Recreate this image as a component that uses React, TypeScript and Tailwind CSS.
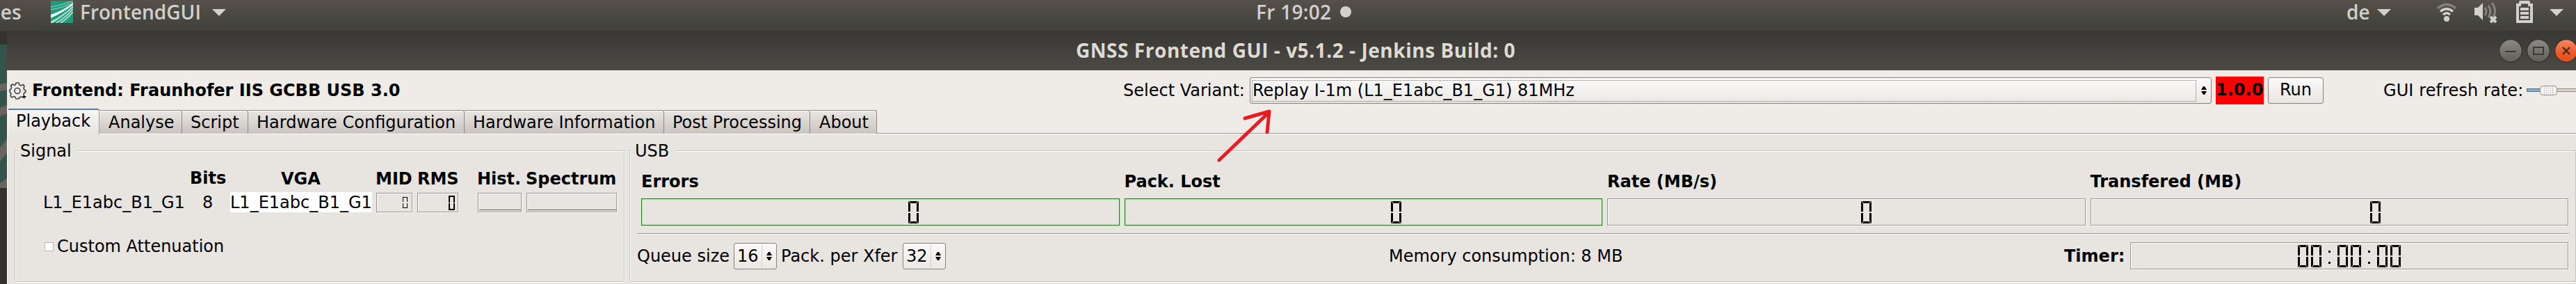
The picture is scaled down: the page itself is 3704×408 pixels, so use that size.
import type { ReactNode } from "react";

function Caret({ className = "" }: { className?: string }) {
  return (
    <svg className={`shrink-0 ${className}`} width="20" height="10" viewBox="0 0 20 10">
      <path d="M0 0H20L10 10Z" fill="#d2d0cc" />
    </svg>
  );
}

function Corner({ className }: { className: string }) {
  return <span className={`absolute h-px w-[4px] bg-[#b5b2ae] ${className}`} />;
}

/* Seven-segment zero: an upper and a lower bracket */
function Digit({ small = false, thin = false }: { small?: boolean; thin?: boolean }) {
  if (small) {
    return (
      <span className="flex shrink-0 flex-col justify-between" aria-label="0">
        <span className={thin ? "h-[7px] w-[7px] border border-b-0 border-black" : "h-[10px] w-[9px] border-2 border-b-0 border-black"} />
        <span className={thin ? "mt-0.5 h-[7px] w-[7px] border border-t-0 border-black" : "mt-px h-[10px] w-[9px] border-2 border-t-0 border-black"} />
      </span>
    );
  }
  return (
    <span className="relative flex h-8 w-[15px] shrink-0 flex-col justify-between" aria-label="0">
      <span className="h-[15px] border-[3px] border-b-0 border-black" />
      <span className="h-[15px] border-[3px] border-t-0 border-black" />
      <Corner className="left-0 top-[1px] rotate-45" />
      <Corner className="right-0 top-[1px] -rotate-45" />
      <Corner className="bottom-[1px] left-0 -rotate-45" />
      <Corner className="bottom-[1px] right-0 rotate-45" />
    </span>
  );
}

function Colon() {
  return (
    <span className="flex h-8 w-[15px] shrink-0 flex-col items-center gap-[13px] pt-2" aria-label=":">
      <span className="h-[3px] w-[3px] bg-black" />
      <span className="h-[3px] w-[3px] bg-black" />
    </span>
  );
}

function Arrows({ className = "" }: { className?: string }) {
  return (
    <svg className={`shrink-0 ${className}`} width="8" height="12" viewBox="0 0 8 12">
      <path d="M0 5L3 0H5L8 5ZM0 7H8L5 12H3Z" fill="#000" />
    </svg>
  );
}

function Tab({ label, className }: { label: string; className: string }) {
  return (
    <div
      className={`flex h-[34px] shrink-0 items-start whitespace-nowrap rounded-tr-[3px] border-r border-t border-[#8c8883] bg-linear-to-b from-[#eae6e2] to-[#c9c4be] pt-[3px] shadow-[inset_0_1px_0_#fcfbfa] ${className}`}
    >
      {label}
    </div>
  );
}

function Group({ title, className, children }: { title: string; className: string; children: ReactNode }) {
  return (
    <fieldset
      className={`m-0 h-[202px] min-w-0 shrink-0 border border-[#c6c2be] p-0 shadow-[inset_1px_1px_0_#fff,1px_1px_0_#fff] ${className}`}
    >
      <legend className="ml-[3px] h-[27px] bg-[#e8e4e0] pl-[4px] pr-[9px] leading-[28px]">{title}</legend>
      {children}
    </fieldset>
  );
}

function Spin({ value, className = "" }: { value: string; className?: string }) {
  return (
    <div
      className={`flex h-[38px] w-[62px] shrink-0 items-center rounded-[3px] border border-[#85817b] bg-linear-to-b from-[#fbfaf9] to-[#ebe7e3] pl-[4px] ${className}`}
    >
      <span className="w-[35px] leading-[28px]">{value}</span>
      <span className="h-[32px] w-px bg-[#d3cfca]" />
      <Arrows className="ml-[6px]" />
    </div>
  );
}

function Meter({ label, offset, ok = false }: { label: string; offset: string; ok?: boolean }) {
  return (
    <div className="min-w-0 flex-1">
      <div className="h-[38px] font-bold leading-[28px]">{label}</div>
      <div
        className={`flex h-[39px] items-center border ${
          ok
            ? "border-[#1a7f1a] shadow-[inset_1px_1px_0_#a6f3a0,1px_1px_0_#a6f3a0]"
            : "border-[#999591] shadow-[inset_1px_1px_0_#fff,1px_1px_0_#fff]"
        } ${offset}`}
      >
        <Digit />
      </div>
    </div>
  );
}

const inset = "border border-[#999591] shadow-[inset_1px_1px_0_#fff,1px_1px_0_#fff]";

function TopBar() {
  return (
    <header className="flex h-[45px] items-start bg-linear-to-b from-[#55514a] to-[#403f3a] pt-px font-['Open_Sans',sans-serif] text-[28px] font-semibold leading-[33px] text-[#d2d0cc]">
      <div className="flex w-[73px] shrink-0">
        <span className="-ml-[7px] w-[60px] whitespace-nowrap">ies</span>
      </div>
      <svg className="shrink-0" width="32" height="32" viewBox="0 0 32 32">
        <rect width="32" height="32" fill="#1f9b7b" />
        <path d="M0 9Q18 6 32 0M0 13Q18 10 32 3" stroke="#7cc6b2" strokeWidth="1.4" fill="none" />
        <path d="M0 20Q18 14 32 3L32 6Q18 17 0 25Z" fill="#e8f5f1" />
        <path d="M0 30Q18 21 32 7L32 10Q20 21 3 32L0 32Z" fill="#b9e0d5" />
        <path d="M8 32Q22 24 32 12M14 32Q24 26 32 16" stroke="#c5e6dd" strokeWidth="1.6" fill="none" />
      </svg>
      <span className="ml-[10px] w-[190px] shrink-0 whitespace-nowrap">FrontendGUI</span>
      <Caret className="mt-[12px]" />
      <span className="ml-[1481px] w-[121px] shrink-0 whitespace-nowrap tracking-[0.3px]">Fr 19:02</span>
      <span className="mt-[8px] h-[16px] w-[16px] shrink-0 rounded-full bg-[#d2d0cc]" />
      <span className="ml-[1431px] w-[44px] shrink-0">de</span>
      <Caret className="mt-[12px]" />
      <svg className="ml-[66px] mt-[3px] shrink-0" width="28" height="28" viewBox="0 0 28 28" fill="none">
        <path d="M1 8Q14 -3 27 8" stroke="#858279" strokeWidth="3.4" />
        <path d="M5 12.500Q14 5 23 12.500" stroke="#d2d0cc" strokeWidth="3.4" />
        <path d="M9 17Q14 12.500 19 17" stroke="#d2d0cc" strokeWidth="3.4" />
        <circle cx="14" cy="23" r="4" fill="#d2d0cc" />
      </svg>
      <svg className="ml-[26px] mt-[2px] shrink-0" width="33" height="31" viewBox="0 0 33 31" fill="none">
        <path d="M0 8H5L12 1V26L5 19H0Z" fill="#d2d0cc" />
        <path d="M15 8Q19 13 15 19M20 5Q26 13 20 22M25 1Q33 12 27 21" stroke="#858279" strokeWidth="3" />
        <path d="M23 21L31 29M31 21L23 29" stroke="#d2d0cc" strokeWidth="4" />
      </svg>
      <svg className="ml-[27px] shrink-0" width="24" height="32" viewBox="0 0 24 32">
        <path d="M0 4H4V2Q4 0 6 0H18Q20 0 20 2V4H24V32H0Z" fill="#d2d0cc" />
        <path d="M4 8H7V4.500H17V8H20V28H4Z" fill="#4a4842" />
        <path d="M6 10H18V14H6ZM6 16H18V20H6ZM6 22H18V26H6Z" fill="#d2d0cc" />
      </svg>
      <Caret className="ml-[24px] mt-[12px]" />
    </header>
  );
}

function TitleBar() {
  return (
    <div className="flex h-[56px] items-center bg-linear-to-b from-[#3a3834] to-[#4c4a45] font-['Open_Sans',sans-serif]">
      <h1 className="ml-[1537px] w-[2047px] shrink-0 whitespace-nowrap pb-[3px] text-[28px] font-bold leading-[34px] tracking-[0.54px] text-[#dfdbd2]">
        GNSS Frontend GUI - v5.1.2 - Jenkins Build: 0
      </h1>
      <svg className="shrink-0" width="110" height="40" viewBox="0 0 110 40">
        <defs>
          <linearGradient id="grayButton" x1="0" y1="0" x2="0" y2="1">
            <stop offset="0" stopColor="#8d8a83" />
            <stop offset="1" stopColor="#605e58" />
          </linearGradient>
          <linearGradient id="closeButton" x1="0" y1="0" x2="0" y2="1">
            <stop offset="0" stopColor="#f58a63" />
            <stop offset="0.6" stopColor="#ea5a2c" />
            <stop offset="1" stopColor="#e14f1e" />
          </linearGradient>
        </defs>
        <g stroke="#33312d" strokeWidth="1.2">
          <circle cx="16" cy="20" r="16.300" fill="url(#grayButton)" />
          <circle cx="56" cy="20" r="16.300" fill="url(#grayButton)" />
          <circle cx="96" cy="20" r="16.300" fill="url(#closeButton)" />
        </g>
        <path d="M8 21H24M49 15H63V25H49Z" stroke="#3c3a36" strokeWidth="2" fill="none" />
        <path d="M91 15L101 25M101 15L91 25" stroke="#4a2a12" strokeWidth="2.400" />
      </svg>
    </div>
  );
}

function Toolbar() {
  return (
    <div className="flex h-[55px] items-start pt-[9px]">
      <svg className="ml-[3px] mt-[8px] shrink-0" width="25" height="25" viewBox="0 0 25 25" fill="none" stroke="#45484f" strokeWidth="1.700" strokeLinejoin="round">
        <path d="M10 1H14L15 4L17.500 5L20.500 3.500L22 6L21 9L22 11L24 12V14L21.500 16L21 18L22 21L20 22L17 21L15 22L14 24H10L9 21.500L7 20.500L4 22L2 20L3 17L2 15L1 14V11L3 9.500L3.500 7.500L2.500 4.500L5 3L8 4.500L9 4Z" />
        <circle cx="12" cy="12.500" r="4" />
        <path d="M19 20H25L22 23.500Z" fill="#000" stroke="none" />
      </svg>
      <span className="ml-[8px] mt-[6px] w-[1569px] shrink-0 whitespace-nowrap font-bold leading-[28px]">
        Frontend: Fraunhofer IIS GCBB USB 3.0
      </span>
      <span className="mt-[6px] w-[182px] shrink-0 whitespace-nowrap leading-[28px]">Select Variant:</span>
      <div className="mt-px flex h-[38px] w-[1383px] shrink-0 items-center rounded-[3px] border border-[#85817b] bg-linear-to-b from-[#fbfaf9] to-[#ebe7e3] pl-[2px]">
        <span className="flex h-[31px] w-[1358px] items-center border border-dotted border-[#77736e] leading-[28px]">
          Replay I-1m (L1_E1abc_B1_G1) 81MHz
        </span>
        <Arrows className="ml-[7px]" />
      </div>
      <span className="ml-[6px] flex h-[40px] w-[69px] shrink-0 items-center bg-[#ff0000] pb-[2px] font-bold leading-[28px]">
        1.0.0
      </span>
      <button className="ml-[6px] mt-px flex h-[38px] w-[80px] shrink-0 items-center justify-center rounded-[3px] border border-[#85817b] bg-linear-to-b from-[#fbfaf9] to-[#e9e5e1] pb-[2px] leading-[28px]">
        Run
      </button>
      <span className="ml-[86px] mt-[6px] w-[206px] shrink-0 whitespace-nowrap leading-[28px] tracking-[0.1px]">GUI refresh rate:</span>
      <svg className="mt-[12px] shrink-0" width="71" height="16" viewBox="0 0 71 16">
        <rect x="0.500" y="5.500" width="24" height="4" fill="#7fb0d8" stroke="#4a6f92" />
        <rect x="40" y="5.500" width="40" height="4" fill="#d9d5c9" stroke="#8f8b84" />
        <rect x="19.500" y="1.500" width="24" height="13" rx="4" fill="#f5f3f1" stroke="#8f8b84" />
        <path d="M25.500 2V14M37.500 2V14" stroke="#d5d1cc" />
        <path d="M28 4.500H36M28 8H36M28 11.500H36" stroke="#a5a19c" strokeDasharray="1 2" />
      </svg>
    </div>
  );
}

function SignalGroup() {
  return (
    <Group title="Signal" className="ml-[10px] w-[877px]">
      <div className="flex h-[45px] items-start whitespace-nowrap pt-[12px] font-bold leading-[28px]">
        <span className="ml-[251px] w-[131px] shrink-0">Bits</span>
        <span className="mt-px w-[136px] shrink-0">VGA</span>
        <span className="mt-px w-[60px] shrink-0">MID</span>
        <span className="mt-px w-[86px] shrink-0">RMS</span>
        <span className="mt-px w-[70px] shrink-0">Hist.</span>
        <span className="mt-px shrink-0">Spectrum</span>
      </div>
      <div className="flex h-[60px] items-start pt-[2px] leading-[28px]">
        <span className="ml-[40px] w-[229px] shrink-0">L1_E1abc_B1_G1</span>
        <span className="w-[40px] shrink-0">8</span>
        <span className="-mt-px h-[29px] w-[204px] shrink-0 whitespace-nowrap bg-white pt-px leading-[28px]">L1_E1abc_B1_G1</span>
        <span className={`ml-[6px] flex h-[28px] w-[52px] shrink-0 items-center justify-end pr-[6px] ${inset}`}>
          <Digit small thin />
        </span>
        <span className={`ml-[7px] flex h-[28px] w-[59px] shrink-0 items-center justify-end pr-[4px] ${inset}`}>
          <Digit small />
        </span>
        <span className={`ml-[28px] flex h-[28px] w-[63px] shrink-0 items-end pb-[2px] pl-px ${inset}`}>
          <span className="h-px w-full bg-[#5f5d5a]" />
        </span>
        <span className={`ml-[7px] flex h-[28px] w-[130px] shrink-0 items-end pb-[2px] pl-px ${inset}`}>
          <span className="h-px w-full bg-[#5f5d5a]" />
        </span>
      </div>
      <label className="ml-[42px] flex items-center gap-[5px] pt-[5px] leading-[28px]">
        <span className="h-[13px] w-[13px] border border-[#b9b5b0] bg-white" />
        Custom Attenuation
      </label>
    </Group>
  );
}

function UsbGroup() {
  return (
    <Group title="USB" className="ml-[7px] w-[2799px]">
      <div className="ml-[16px] mr-[10px] flex gap-[7px] pt-[17px]">
        <Meter ok label="Errors" offset="pl-[383px]" />
        <Meter ok label="Pack. Lost" offset="pl-[382px]" />
        <Meter label="Rate (MB/s)" offset="pl-[364px]" />
        <Meter label="Transfered (MB)" offset="pl-[401px]" />
      </div>
      <div className="ml-[10px] mr-[9px] mt-[11px] h-[2px] border-b border-t border-b-white border-t-[#999591]" />
      <div className="ml-[10px] mr-[10px] flex items-start whitespace-nowrap pt-[11px] leading-[28px]">
        <span className="mt-[6px] w-[139px] shrink-0">Queue size</span>
        <Spin value="16" className="mt-px" />
        <span className="ml-[6px] mt-[6px] w-[175px] shrink-0">Pack. per Xfer</span>
        <Spin value="32" className="mt-px" />
        <span className="ml-[637px] mt-[6px] w-[971px] shrink-0">Memory consumption: 8 MB</span>
        <span className="mt-[6px] w-[95px] shrink-0 font-bold">Timer:</span>
        <div className={`flex h-[39px] min-w-0 flex-1 items-center gap-[4px] pl-[240px] ${inset}`}>
          <Digit />
          <Digit />
          <Colon />
          <Digit />
          <Digit />
          <Colon />
          <Digit />
          <Digit />
        </div>
      </div>
    </Group>
  );
}

export default function App() {
  return (
    <div className="h-[408px] w-[3704px] overflow-hidden bg-[#efebe7] font-['DejaVu_Sans',sans-serif] text-[24px] text-black">
      <TopBar />
      <div className="flex">
        <svg className="shrink-0" width="10" height="363" viewBox="0 0 10 363">
          <rect width="10" height="363" fill="#33322d" />
          <rect y="19" width="10" height="206" fill="#34534a" />
          <path d="M0 76L10 74V84L0 86ZM0 110L10 106V118L0 122ZM0 167L10 155V175L0 187ZM0 218L10 211V225H0Z" fill="#68655f" />
        </svg>
        <main className="w-[3694px] shrink-0">
          <TitleBar />
          <Toolbar />
          <nav className="flex h-[37px] items-start">
            <div className="z-10 ml-px h-[37px] w-[132px] shrink-0 rounded-t-[3px] border-l border-r border-t-2 border-l-white border-r-[#a5a19c] border-t-[#55799c] bg-linear-to-b from-[#f7f5f3] to-[#e8e4e0] pl-[11px] pt-[2px] leading-[28px]">
              Playback
            </div>
            <div className="mt-[2px] flex h-[35px] flex-1 items-start border-b border-white leading-[28px]">
              <div className="flex h-[34px] w-full border-b border-[#989590]">
                <Tab label="Analyse" className="w-[119px] pl-[13px]" />
                <Tab label="Script" className="w-[95px] pl-[12px]" />
                <Tab label="Hardware Configuration" className="w-[311px] pl-[12px]" />
                <Tab label="Hardware Information" className="w-[287px] pl-[12px]" />
                <Tab label="Post Processing" className="w-[210px] pl-[12px]" />
                <Tab label="About" className="w-[96px] pl-[13px]" />
              </div>
            </div>
          </nav>
          <div className="flex h-[215px] items-start border-l border-l-white bg-[#e8e4e0] pt-[10px] leading-[28px]">
            <SignalGroup />
            <UsbGroup />
          </div>
        </main>
      </div>
      <svg className="pointer-events-none absolute left-[1745px] top-[152px]" width="90" height="84" viewBox="0 0 90 84" fill="none" stroke="#e81c25" strokeWidth="5" strokeLinecap="round" strokeLinejoin="round">
        <path d="M8 78L80 9M45 18L80 8L77 38" />
      </svg>
    </div>
  );
}
